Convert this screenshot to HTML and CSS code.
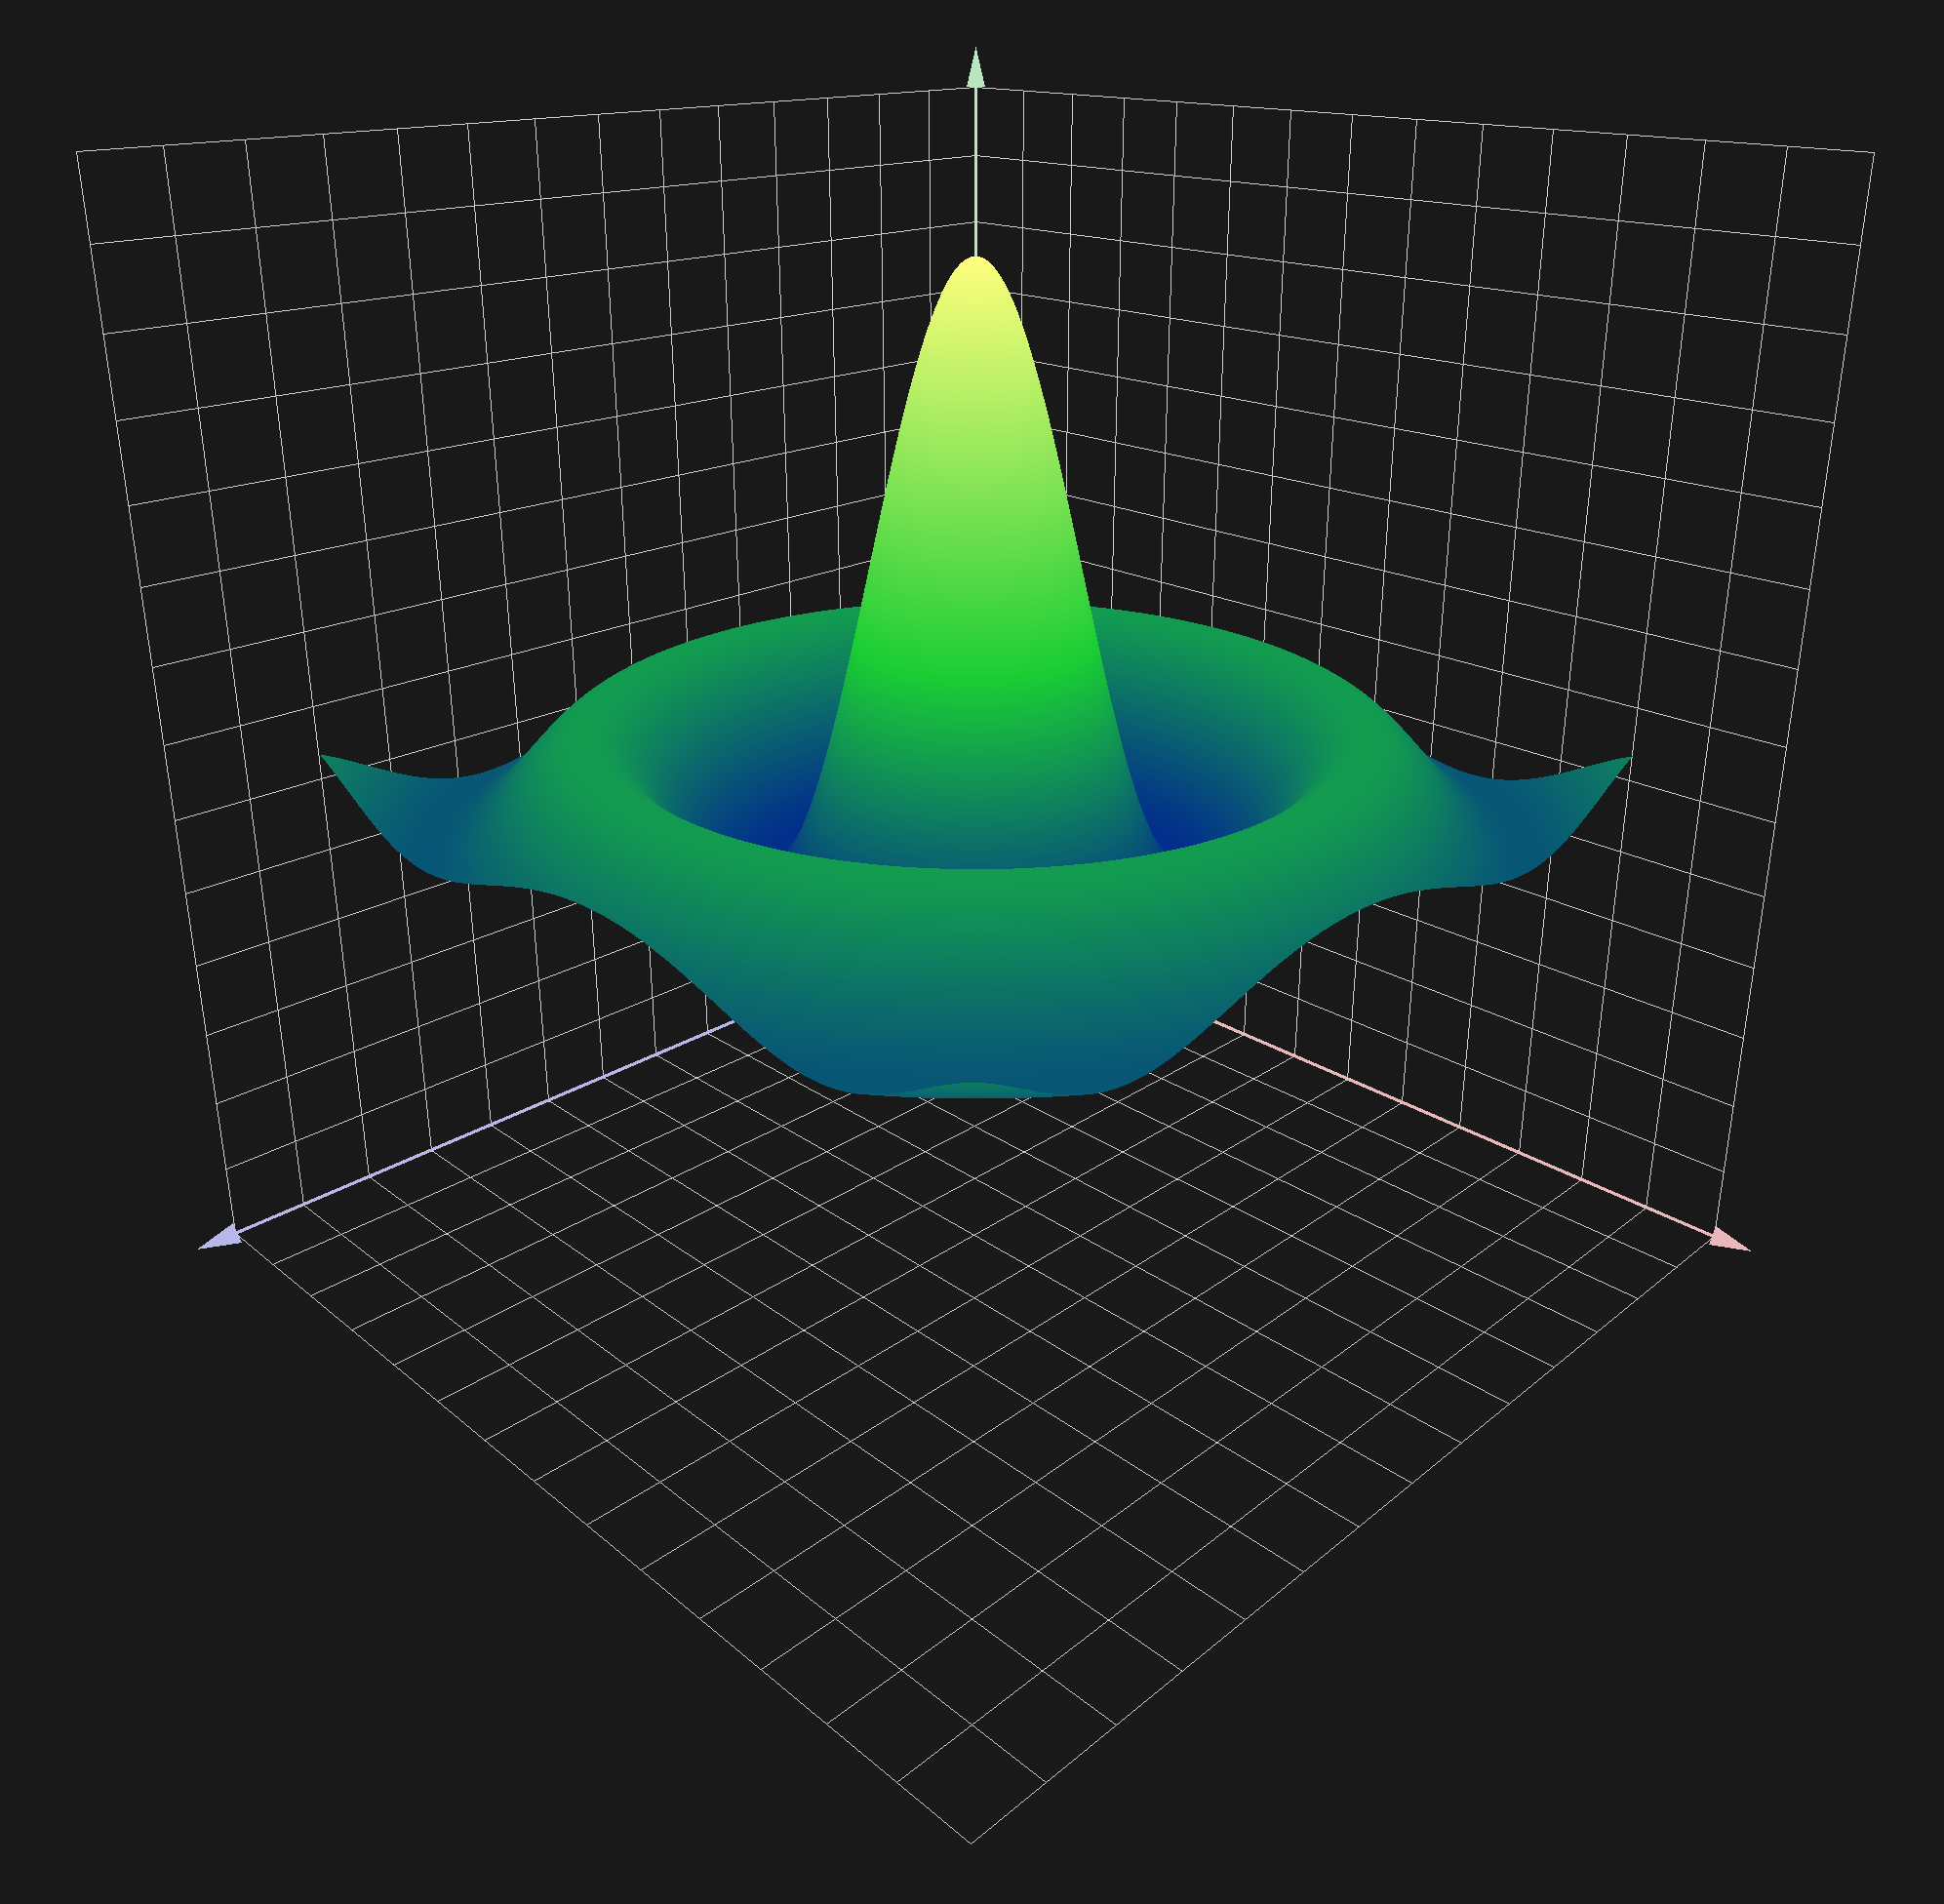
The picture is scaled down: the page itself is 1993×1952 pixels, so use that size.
FILE: index.html
```html
<!DOCTYPE html>
<html lang="en">
<head>
<meta charset="utf-8">
<title>Surface plot</title>
<link rel="stylesheet" href="styles.css">
</head>
<body>
<main class="plot">
<canvas id="surface" class="plot-canvas" width="1993" height="1952"></canvas>
</main>
<script src="plot.js"></script>
</body>
</html>
```
FILE: styles.css
```css
html, body { margin: 0; padding: 0; background: #191919; }
.plot { width: 1993px; height: 1952px; overflow: hidden; }
.plot-canvas { display: block; }
```
FILE: plot.js
```js
// Software-rendered 3D plot: gridded box, axes with arrow cones and a sin(r)/r surface.
const W = 1993, H = 1952;
const canvas = document.getElementById('surface');
const ctx = canvas.getContext('2d');
const img = ctx.createImageData(W, H);
const D = img.data;
for (let i = 0; i < D.length; i += 4) { D[i] = D[i + 1] = D[i + 2] = 25; D[i + 3] = 255; }

// Camera: projective matrix fitted to the corners of the unit box.
const P = [0.333124, -0.816505, -0.134688, 1.000152, 0.020189, 0.019893, -0.864571, 0.941718, -0.241098, -0.239443, -0.134852];
function proj(x, y, z) {
  const w = P[8] * x + P[9] * y + P[10] * z + 1;
  return [1000 * (P[0] * x + P[1] * y + P[2] * z + P[3]) / w, 1000 * (P[4] * x + P[5] * y + P[6] * z + P[7]) / w];
}

function px(x, y, c) {
  if (x < 0 || y < 0 || x >= W || y >= H) return;
  const i = (y * W + x) * 4;
  D[i] = c[0]; D[i + 1] = c[1]; D[i + 2] = c[2];
}

function line(a, b, c) {
  let x0 = Math.round(a[0]), y0 = Math.round(a[1]);
  const x1 = Math.round(b[0]), y1 = Math.round(b[1]);
  const dx = Math.abs(x1 - x0), dy = -Math.abs(y1 - y0), sx = x0 < x1 ? 1 : -1, sy = y0 < y1 ? 1 : -1;
  let e = dx + dy;
  for (;;) {
    px(x0, y0, c);
    if (x0 === x1 && y0 === y1) break;
    const e2 = 2 * e;
    if (e2 >= dy) { e += dy; x0 += sx; }
    if (e2 <= dx) { e += dx; y0 += sy; }
  }
}

function tri(a, b, c, paint) {
  const minx = Math.max(0, Math.floor(Math.min(a[0], b[0], c[0]))), maxx = Math.min(W - 1, Math.ceil(Math.max(a[0], b[0], c[0])));
  const miny = Math.max(0, Math.floor(Math.min(a[1], b[1], c[1]))), maxy = Math.min(H - 1, Math.ceil(Math.max(a[1], b[1], c[1])));
  const d = (b[0] - a[0]) * (c[1] - a[1]) - (b[1] - a[1]) * (c[0] - a[0]);
  if (d === 0) return;
  for (let y = miny; y <= maxy; y++) for (let x = minx; x <= maxx; x++) {
    const X = x + .5, Y = y + .5;
    const w1 = ((X - a[0]) * (c[1] - a[1]) - (Y - a[1]) * (c[0] - a[0])) / d;
    const w2 = ((b[0] - a[0]) * (Y - a[1]) - (b[1] - a[1]) * (X - a[0])) / d;
    const w0 = 1 - w1 - w2;
    if (w0 < -1e-4 || w1 < -1e-4 || w2 < -1e-4) continue;
    paint(x, y, a[2] * w0 + b[2] * w1 + c[2] * w2);
  }
}
const solid = c => (x, y) => px(x, y, c);

function thick(a, b, w, c) {
  const dx = b[0] - a[0], dy = b[1] - a[1], l = Math.hypot(dx, dy), nx = -dy / l * w / 2, ny = dx / l * w / 2;
  const A = [a[0] + nx, a[1] + ny], B = [b[0] + nx, b[1] + ny], C = [b[0] - nx, b[1] - ny], E = [a[0] - nx, a[1] - ny];
  tri(A, B, C, solid(c)); tri(A, C, E, solid(c));
}

// Grid on the floor and the two back walls.
const GRID = [204, 204, 204], CELLS = 14;
for (let i = 0; i <= CELLS; i++) {
  const t = i / CELLS;
  line(proj(t, 0, 0), proj(t, 1, 0), GRID); line(proj(0, t, 0), proj(1, t, 0), GRID);
  line(proj(t, 0, 0), proj(t, 0, 1), GRID); line(proj(0, 0, t), proj(1, 0, t), GRID);
  line(proj(0, t, 0), proj(0, t, 1), GRID); line(proj(0, 0, t), proj(0, 1, t), GRID);
}

// Axes and their arrow heads.
const RED = [232, 184, 186], GRN = [184, 230, 192], BLU = [184, 184, 232];
thick(proj(0, 0, 0), proj(1, 0, 0), 3.2, RED);
thick(proj(0, 0, 0), proj(0, 1, 0), 3.2, BLU);
thick(proj(0, 0, 0), proj(0, 0, 1), 3.2, GRN);
tri([1000.5, 48], [991, 89], [1010, 89], solid(GRN));
tri([202, 1281], [239, 1254], [248, 1274], solid(BLU));
tri([1796, 1283], [1759, 1257], [1752, 1276], solid(RED));

// Colour map from height.
const STOPS = [[0, 2, 46, 140], [.41, 26, 205, 52], [1, 255, 255, 125]];
function cmap(t) {
  t = Math.max(0, Math.min(1, t));
  const i = t < STOPS[1][0] ? 0 : 1, a = STOPS[i], b = STOPS[i + 1], f = (t - a[0]) / (b[0] - a[0]);
  return [a[1] + (b[1] - a[1]) * f, a[2] + (b[2] - a[2]) * f, a[3] + (b[3] - a[3]) * f];
}

// Surface z = sin(r)/r, drawn from the far corner forward so nearer parts cover farther ones.
const SIZE = .4401, HEIGHT = .4865, BASE = .4112, CX = .3938, CY = .3921, RANGE = 9.3385, ZMIN = -.2172, MESH = 500;
const sinc = r => r < 1e-6 ? 1 : Math.sin(r) / r;
const verts = [];
for (let i = 0; i <= MESH; i++) {
  const row = [];
  for (let j = 0; j <= MESH; j++) {
    const u = -1 + 2 * i / MESH, v = -1 + 2 * j / MESH, h = sinc(RANGE * Math.hypot(u, v));
    const q = proj(CX + SIZE * u, CY + SIZE * v, BASE + HEIGHT * h);
    row.push([q[0], q[1], (h - ZMIN) / (1 - ZMIN)]);
  }
  verts.push(row);
}
const shade = (x, y, t) => px(x, y, cmap(t));
for (let i = 0; i < MESH; i++) for (let j = 0; j < MESH; j++) {
  tri(verts[i][j], verts[i + 1][j], verts[i + 1][j + 1], shade);
  tri(verts[i][j], verts[i + 1][j + 1], verts[i][j + 1], shade);
}
ctx.putImageData(img, 0, 0);
```
